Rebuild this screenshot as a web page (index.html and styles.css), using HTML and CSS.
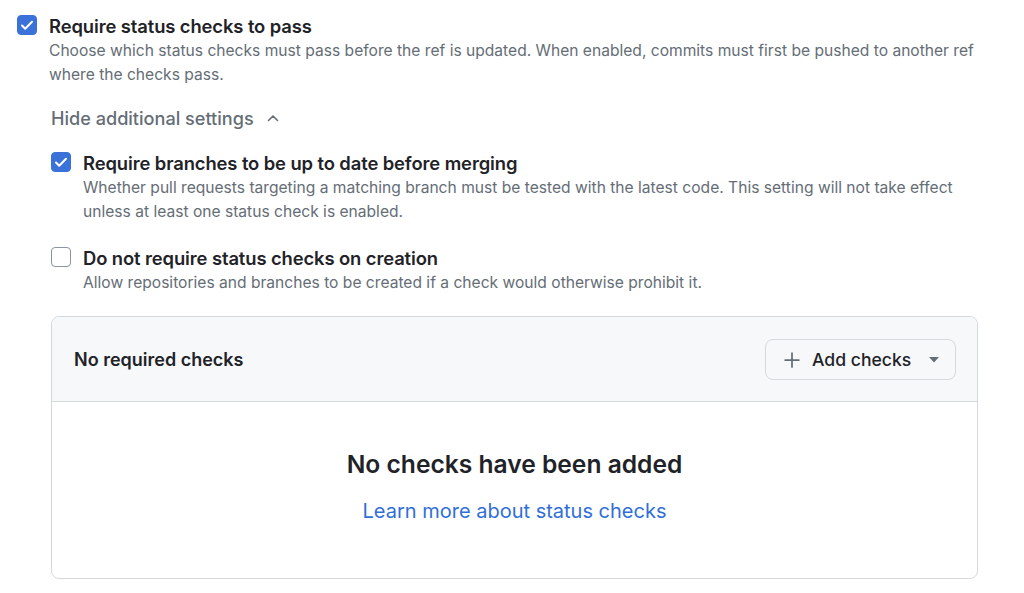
FILE: index.html
```html
<!DOCTYPE html>
<html>
<head>
<meta charset="utf-8">
<link rel="stylesheet" href="styles.css">
</head>
<body>
<div class="page">
  <div class="option">
    <span class="cb checked"><svg viewBox="0 0 20 20" width="20" height="20"><path d="M5 10.5l3.2 3.2L15 6.8" fill="none" stroke="#fff" stroke-width="2" stroke-linecap="round" stroke-linejoin="round"/></svg></span>
    <div class="opt-text">
      <div class="label">Require status checks to pass</div>
      <div class="desc">Choose which status checks must pass before the ref is updated. When enabled, commits must first be pushed to another ref where the checks pass.</div>
    </div>
  </div>
  <div class="nested">
    <div class="toggle">Hide additional settings <svg class="chev" viewBox="0 0 16 16" width="16" height="16"><path d="M3.5 10.5L8 6l4.5 4.5" fill="none" stroke="#656d76" stroke-width="1.6" stroke-linecap="round" stroke-linejoin="round"/></svg></div>
    <div class="option sub">
      <span class="cb checked"><svg viewBox="0 0 20 20" width="20" height="20"><path d="M5 10.5l3.2 3.2L15 6.8" fill="none" stroke="#fff" stroke-width="2" stroke-linecap="round" stroke-linejoin="round"/></svg></span>
      <div class="opt-text">
        <div class="label">Require branches to be up to date before merging</div>
        <div class="desc">Whether pull requests targeting a matching branch must be tested with the latest code. This setting will not take effect unless at least one status check is enabled.</div>
      </div>
    </div>
    <div class="option sub">
      <span class="cb"></span>
      <div class="opt-text">
        <div class="label">Do not require status checks on creation</div>
        <div class="desc">Allow repositories and branches to be created if a check would otherwise prohibit it.</div>
      </div>
    </div>
    <div class="box">
      <div class="box-head">
        <div class="box-title">No required checks</div>
        <button class="btn"><svg viewBox="0 0 16 16" width="20" height="20"><path d="M8 2.5v11M2.5 8h11" stroke="#656d76" stroke-width="1.4" stroke-linecap="round"/></svg><span>Add checks</span><svg class="caret" viewBox="0 0 10 6" width="10" height="6"><path d="M0 0h10L5 5.5z" fill="#656d76"/></svg></button>
      </div>
      <div class="box-body">
        <div class="empty-title">No checks have been added</div>
        <a class="link" href="#">Learn more about status checks</a>
      </div>
    </div>
  </div>
</div>
</body>
</html>
```
FILE: styles.css
```css
* { box-sizing: border-box; }
body {
  margin: 0;
  background: #fff;
  font-family: Inter, "Noto Sans", sans-serif;
  color: #1f2328;
}
.page {
  padding: 16px 40px 0 17px;
  width: 1024px;
}
.option {
  display: flex;
  gap: 12px;
  align-items: flex-start;
}
.cb {
  flex: none;
  width: 20px;
  height: 20px;
  border-radius: 4px;
  border: 1.5px solid #8c959f;
  background: #fff;
  display: flex;
  margin-top: -1px;
}
.cb.checked {
  background: #3a72d9;
  border-color: #3a72d9;
}
.cb svg { margin: -1.5px; }
.label {
  font-size: 18.4px;
  font-weight: 600;
  line-height: 20px;
  letter-spacing: -0.1px;
}
.desc {
  margin-top: 3px;
  font-size: 15.6px;
  line-height: 24px;
  color: #656d76;
}
.nested {
  padding-left: 34px;
}
.toggle {
  margin-top: 19px;
  font-size: 18.1px;
  line-height: 24px;
  color: #656d76;
  font-weight: 500;
  display: flex;
  align-items: center;
  gap: 11px;
}
.option.sub { margin-top: 23px; }
.option.sub + .option.sub { margin-top: 24px; }
.box {
  margin-top: 21px;
  width: 927px;
  border: 1px solid #d5d9de;
  border-radius: 8px;
  overflow: hidden;
}
.box-head {
  background: #f6f8fa;
  height: 85px;
  border-bottom: 1px solid #d5d9de;
  display: flex;
  align-items: center;
  justify-content: space-between;
  padding: 1px 21px 0 22px;
}
.box-title {
  font-size: 18px;
  font-weight: 600;
}
.btn {
  height: 41px;
  width: 191px;
  border: 1px solid #d5d9de;
  border-radius: 8px;
  background: #f6f8fa;
  display: flex;
  align-items: center;
  padding: 0 16px 0 16px;
  gap: 10px;
  font-family: inherit;
  font-size: 17.6px;
  font-weight: 500;
  color: #1f2328;
}
.btn span { flex: 1; text-align: left; }
.box-body {
  height: 176px;
  display: flex;
  flex-direction: column;
  align-items: center;
  padding-top: 46px;
}
.empty-title {
  font-size: 24.6px;
  font-weight: 600;
  line-height: 32px;
}
.link {
  margin-top: 18px;
  font-size: 20px;
  color: #2f6fd9;
  text-decoration: none;
  line-height: 26px;
}
```
